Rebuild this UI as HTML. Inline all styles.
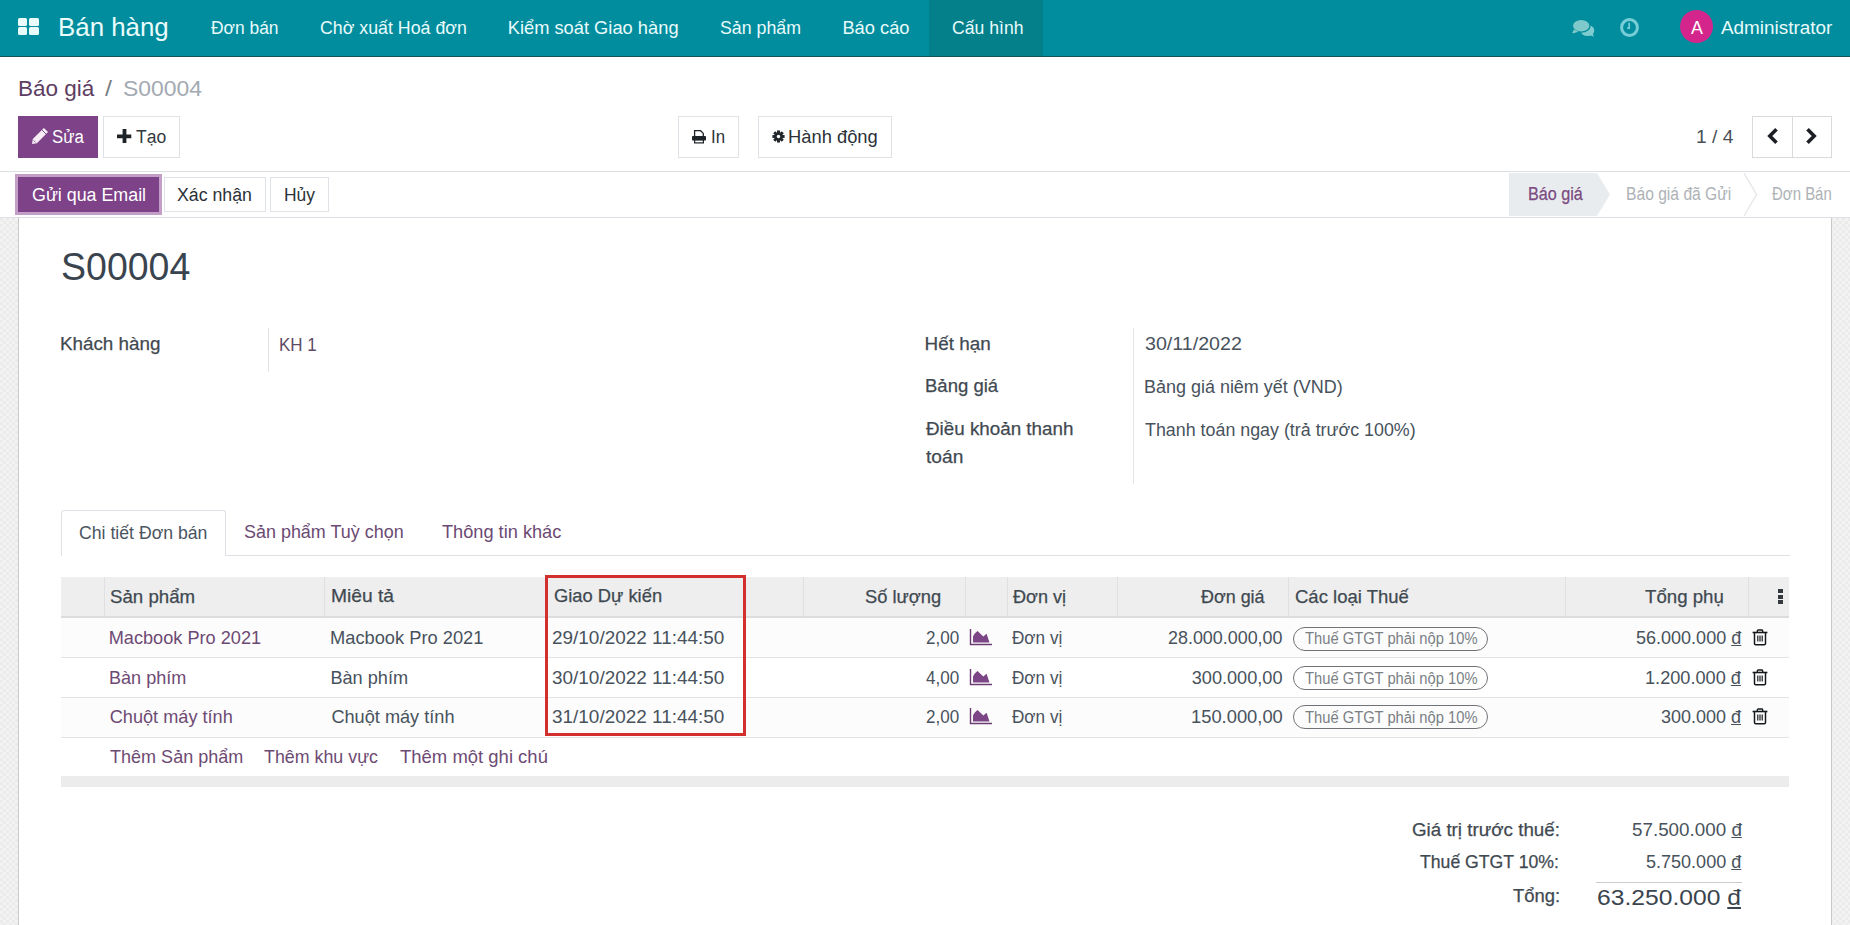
<!DOCTYPE html>
<html><head><meta charset="utf-8">
<style>
*{box-sizing:border-box;margin:0;padding:0}
html,body{width:1850px;height:925px;overflow:hidden;background:#fff;font-family:"Liberation Sans",sans-serif}
.t{position:absolute;white-space:pre;line-height:1;transform-origin:0 0}
.b{position:absolute}
</style></head><body>
<!-- background pattern -->
<div class="b" style="left:0;top:218px;width:1850px;height:707px;background-color:#ebebeb;background-image:linear-gradient(45deg,#f3f3f3 25%,transparent 25%,transparent 75%,#f3f3f3 75%),linear-gradient(45deg,#f3f3f3 25%,transparent 25%,transparent 75%,#f3f3f3 75%);background-size:6px 6px;background-position:0 0,3px 3px"></div>
<!-- sheet -->
<div class="b" style="left:18px;top:218px;width:1814px;height:707px;background:#fff;border-left:1px solid #c9c9c9;border-right:1px solid #c9c9c9"></div>
<!-- navbar -->
<div class="b" style="left:0;top:0;width:1850px;height:57px;background:#018d9d;border-bottom:1px solid #14525a"></div>
<div class="b" style="left:929px;top:0;width:114px;height:56px;background:#04808b"></div>
<!-- app icon -->
<div class="b" style="left:18px;top:18px;width:9px;height:8px;background:#eafbfc;border-radius:1.5px"></div>
<div class="b" style="left:29px;top:18px;width:9.5px;height:8px;background:#eafbfc;border-radius:1.5px"></div>
<div class="b" style="left:18px;top:27px;width:9px;height:8px;background:#eafbfc;border-radius:1.5px"></div>
<div class="b" style="left:29px;top:27px;width:9.5px;height:8px;background:#eafbfc;border-radius:1.5px"></div>
<!-- chat icon -->
<svg class="b" style="left:1566px;top:12px" width="36" height="30" viewBox="0 0 36 30">
<ellipse cx="21.5" cy="18.5" rx="6.8" ry="5.6" fill="#7fcbd0"/>
<path d="M22 22.5 L28 24.8 L25.5 19 Z" fill="#7fcbd0"/>
<path d="M7.5 18.5 L6 21.8 L13 19.8 Z" fill="#7fcbd0" stroke="#018d9d" stroke-width="0.6"/>
<ellipse cx="15.2" cy="13.8" rx="8.8" ry="6.4" fill="#80c9cb" stroke="#018d9d" stroke-width="1.3"/>
<path d="M7.8 17.5 L6.3 21.3 L12.5 19.4 Z" fill="#80c9cb"/>
</svg>
<!-- clock -->
<svg class="b" style="left:1619px;top:17px" width="21" height="21" viewBox="0 0 21 21">
<circle cx="10.5" cy="10.5" r="7.9" fill="none" stroke="#78ced6" stroke-width="3"/>
<path d="M10.2 5.8 V11.2 H8.2" fill="none" stroke="#78ced6" stroke-width="1.7"/>
</svg>
<!-- avatar -->
<div class="b" style="left:1680px;top:10px;width:33px;height:33px;border-radius:50%;background:#d3258b"></div>

<!-- control panel -->
<div class="b" style="left:0;top:171px;width:1850px;height:1px;background:#dcdfe3"></div>
<div class="b" style="left:0;top:217px;width:1850px;height:1px;background:#dcdfe3"></div>
<div class="b" style="left:18px;top:116px;width:80px;height:42px;background:#7d4288"></div>
<div class="b" style="left:103px;top:116px;width:77px;height:42px;border:1px solid #dfe2e6;background:#fff"></div>
<div class="b" style="left:678px;top:116px;width:61px;height:42px;border:1px solid #dfe2e6;background:#fff"></div>
<div class="b" style="left:758px;top:116px;width:134px;height:42px;border:1px solid #dfe2e6;background:#fff"></div>
<div class="b" style="left:1752px;top:116px;width:80px;height:42px;border:1px solid #d7dadd;background:#fff"></div>
<div class="b" style="left:1792px;top:116px;width:1px;height:42px;background:#d7dadd"></div>
<!-- pencil -->
<svg class="b" style="left:30px;top:128px" width="19" height="17" viewBox="0 0 19 17">
<path d="M2 16 L2.8 11.1 L13.9 0 L18 4.1 L6.9 15.2 Z" fill="#f6ecf6"/>
<path d="M12 2 L16 6" stroke="#7d4288" stroke-width="0.9"/>
<path d="M3.6 12.4 L5.6 14.4" stroke="#7d4288" stroke-width="0.8"/>
</svg>
<!-- plus -->
<svg class="b" style="left:117px;top:129px" width="15" height="15" viewBox="0 0 15 15">
<path d="M5.6 0 H9.4 V5.6 H14.3 V9.2 H9.4 V14 H5.6 V9.2 H0 V5.6 H5.6Z" fill="#1e2328"/>
</svg>
<!-- printer -->
<svg class="b" style="left:691px;top:129px" width="16" height="15" viewBox="0 0 16 15">
<path d="M3.6 7.5 V1.7 H9.6 L12.3 4.4 V7.5" fill="#fff" stroke="#1e2328" stroke-width="1.3"/>
<rect x="1" y="7" width="14" height="4.6" rx="0.8" fill="#1e2328"/>
<rect x="3.6" y="11" width="8.8" height="2.9" fill="#fff" stroke="#1e2328" stroke-width="1.2"/>
</svg>
<!-- gear -->
<svg class="b" style="left:772px;top:130px" width="13" height="13" viewBox="-7.5 -7.5 15 15">
<g fill="#22272c">
<circle r="5"/>
<rect x="-1.7" y="-7" width="3.4" height="14"/>
<rect x="-1.7" y="-7" width="3.4" height="14" transform="rotate(45)"/>
<rect x="-1.7" y="-7" width="3.4" height="14" transform="rotate(90)"/>
<rect x="-1.7" y="-7" width="3.4" height="14" transform="rotate(135)"/>
</g>
<circle r="2" fill="#fff"/>
</svg>
<!-- chevrons -->
<svg class="b" style="left:1766px;top:127px" width="13" height="18" viewBox="0 0 13 18">
<path d="M10.5 2.2 L3.8 9 L10.5 15.8" fill="none" stroke="#1c2025" stroke-width="3.6" stroke-linecap="butt" stroke-linejoin="miter"/>
</svg>
<svg class="b" style="left:1805px;top:127px" width="13" height="18" viewBox="0 0 13 18">
<path d="M2.5 2.2 L9.2 9 L2.5 15.8" fill="none" stroke="#1c2025" stroke-width="3.6" stroke-linecap="butt" stroke-linejoin="miter"/>
</svg>
<!-- status buttons -->
<div class="b" style="left:15px;top:174px;width:147px;height:41px;background:#c39fc7"></div>
<div class="b" style="left:18px;top:177px;width:141px;height:35px;background:#7d4288"></div>
<div class="b" style="left:164px;top:177px;width:102px;height:35px;border:1px solid #dfe2e6"></div>
<div class="b" style="left:270px;top:177px;width:59px;height:35px;border:1px solid #dfe2e6"></div>
<!-- statusbar -->
<svg class="b" style="left:1500px;top:172px" width="350" height="45" viewBox="0 0 350 45">
<path d="M9 1 H97 L110 22.5 L97 44 H9Z" fill="#e9ecef"/>
<path d="M244 1 L256.5 22.5 L244 44" fill="none" stroke="#e3e5e8" stroke-width="1.3"/>
</svg>

<!-- sheet contents -->
<div class="b" style="left:268px;top:328px;width:1px;height:44px;background:#e2e4e6"></div>
<div class="b" style="left:1133px;top:328px;width:1px;height:156px;background:#e2e4e6"></div>
<!-- tabs -->
<div class="b" style="left:61px;top:555px;width:1729px;height:1px;background:#dee2e6"></div>
<div class="b" style="left:61px;top:510px;width:165px;height:46px;background:#fff;border:1px solid #dee2e6;border-bottom:none;border-radius:3px 3px 0 0"></div>
<!-- table -->
<div class="b" style="left:61px;top:577px;width:1728px;height:41px;background:#eeeeee;border-bottom:2px solid #dddddf"></div>
<div class="b" style="left:61px;top:618px;width:1728px;height:40px;background:#fcfcfc;border-bottom:1px solid #e3e3e3"></div>
<div class="b" style="left:61px;top:658px;width:1728px;height:40px;background:#fff;border-bottom:1px solid #e3e3e3"></div>
<div class="b" style="left:61px;top:698px;width:1728px;height:40px;background:#fcfcfc;border-bottom:1px solid #e3e3e3"></div>
<div class="b" style="left:61px;top:776px;width:1728px;height:11px;background:#ececec"></div>
<!-- column dividers -->
<div class="b" style="left:104px;top:577px;width:1px;height:40px;background:#e0e0e0"></div>
<div class="b" style="left:324px;top:577px;width:1px;height:40px;background:#e0e0e0"></div>
<div class="b" style="left:803px;top:577px;width:1px;height:40px;background:#e0e0e0"></div>
<div class="b" style="left:965px;top:577px;width:1px;height:40px;background:#e0e0e0"></div>
<div class="b" style="left:1007px;top:577px;width:1px;height:40px;background:#e0e0e0"></div>
<div class="b" style="left:1117px;top:577px;width:1px;height:40px;background:#e0e0e0"></div>
<div class="b" style="left:1288px;top:577px;width:1px;height:40px;background:#e0e0e0"></div>
<div class="b" style="left:1565px;top:577px;width:1px;height:40px;background:#e0e0e0"></div>
<div class="b" style="left:1748px;top:577px;width:1px;height:40px;background:#e0e0e0"></div>
<!-- kebab -->
<div class="b" style="left:1778px;top:589px;width:5px;height:4px;background:#33393f"></div>
<div class="b" style="left:1778px;top:595px;width:5px;height:4px;background:#33393f"></div>
<div class="b" style="left:1778px;top:600px;width:5px;height:4px;background:#33393f"></div>
<svg class="b" style="left:969px;top:628.0px" width="24" height="18" viewBox="0 0 24 18"><path d="M1.5 1 V16.5 H23" fill="none" stroke="#6a3c72" stroke-width="1.4"/><path d="M4 14.5 V8.5 C5 6 7 4 8.6 3 L14.3 8.6 L17.6 5.8 L20.5 14.5 Z" fill="#7c4585"/></svg>
<div class="b" style="left:1293px;top:626.5px;width:195px;height:24px;border:1px solid #6f7378;border-radius:12px"></div>
<svg class="b" style="left:1752px;top:629.0px" width="16" height="17" viewBox="0 0 16 17"><path d="M5.3 3 V1.8 C5.3 1.3 5.7 1 6.2 1 H9.8 C10.3 1 10.7 1.3 10.7 1.8 V3" fill="none" stroke="#15191c" stroke-width="1.3"/><path d="M0.6 3.5 H15.4" stroke="#15191c" stroke-width="1.6"/><path d="M2.5 4 V14.5 C2.5 15.3 3 15.8 3.8 15.8 H12.2 C13 15.8 13.5 15.3 13.5 14.5 V4" fill="none" stroke="#15191c" stroke-width="1.5"/><path d="M5.8 6.5 V12.5 M8 6.5 V12.5 M10.2 6.5 V12.5" stroke="#15191c" stroke-width="1.2"/></svg>
<svg class="b" style="left:969px;top:667.7px" width="24" height="18" viewBox="0 0 24 18"><path d="M1.5 1 V16.5 H23" fill="none" stroke="#6a3c72" stroke-width="1.4"/><path d="M4 14.5 V8.5 C5 6 7 4 8.6 3 L14.3 8.6 L17.6 5.8 L20.5 14.5 Z" fill="#7c4585"/></svg>
<div class="b" style="left:1293px;top:666.2px;width:195px;height:24px;border:1px solid #6f7378;border-radius:12px"></div>
<svg class="b" style="left:1752px;top:668.7px" width="16" height="17" viewBox="0 0 16 17"><path d="M5.3 3 V1.8 C5.3 1.3 5.7 1 6.2 1 H9.8 C10.3 1 10.7 1.3 10.7 1.8 V3" fill="none" stroke="#15191c" stroke-width="1.3"/><path d="M0.6 3.5 H15.4" stroke="#15191c" stroke-width="1.6"/><path d="M2.5 4 V14.5 C2.5 15.3 3 15.8 3.8 15.8 H12.2 C13 15.8 13.5 15.3 13.5 14.5 V4" fill="none" stroke="#15191c" stroke-width="1.5"/><path d="M5.8 6.5 V12.5 M8 6.5 V12.5 M10.2 6.5 V12.5" stroke="#15191c" stroke-width="1.2"/></svg>
<svg class="b" style="left:969px;top:706.9px" width="24" height="18" viewBox="0 0 24 18"><path d="M1.5 1 V16.5 H23" fill="none" stroke="#6a3c72" stroke-width="1.4"/><path d="M4 14.5 V8.5 C5 6 7 4 8.6 3 L14.3 8.6 L17.6 5.8 L20.5 14.5 Z" fill="#7c4585"/></svg>
<div class="b" style="left:1293px;top:705.4px;width:195px;height:24px;border:1px solid #6f7378;border-radius:12px"></div>
<svg class="b" style="left:1752px;top:707.9px" width="16" height="17" viewBox="0 0 16 17"><path d="M5.3 3 V1.8 C5.3 1.3 5.7 1 6.2 1 H9.8 C10.3 1 10.7 1.3 10.7 1.8 V3" fill="none" stroke="#15191c" stroke-width="1.3"/><path d="M0.6 3.5 H15.4" stroke="#15191c" stroke-width="1.6"/><path d="M2.5 4 V14.5 C2.5 15.3 3 15.8 3.8 15.8 H12.2 C13 15.8 13.5 15.3 13.5 14.5 V4" fill="none" stroke="#15191c" stroke-width="1.5"/><path d="M5.8 6.5 V12.5 M8 6.5 V12.5 M10.2 6.5 V12.5" stroke="#15191c" stroke-width="1.2"/></svg>
<!-- red box -->
<div class="b" style="left:545px;top:575px;width:201px;height:161px;border:3px solid #d22f2f"></div>
<!-- totals line -->
<div class="b" style="left:1596px;top:882px;width:146px;height:1px;background:#c8ccd0"></div>
<div class="t" style="left:58.24px;top:14.00px;font-size:26.45px;color:#e9fbfc;transform:scaleX(0.9781);">Bán hàng</div>
<div class="t" style="left:210.80px;top:19.00px;font-size:18.31px;color:#e9fbfc;transform:scaleX(0.9510);">Đơn bán</div>
<div class="t" style="left:320.10px;top:19.00px;font-size:18.31px;color:#e9fbfc;transform:scaleX(0.9716);">Chờ xuất Hoá đơn</div>
<div class="t" style="left:507.70px;top:19.00px;font-size:18.31px;color:#e9fbfc;">Kiểm soát Giao hàng</div>
<div class="t" style="left:719.80px;top:19.00px;font-size:18.31px;color:#e9fbfc;transform:scaleX(0.9715);">Sản phẩm</div>
<div class="t" style="left:842.40px;top:19.00px;font-size:18.31px;color:#e9fbfc;">Báo cáo</div>
<div class="t" style="left:952.00px;top:19.00px;font-size:18.31px;color:#e9fbfc;transform:scaleX(0.9633);">Cấu hình</div>
<div class="t" style="left:1721.00px;top:19.00px;font-size:18.9px;color:#e9fbfc;">Administrator</div>
<div class="t" style="left:1690.90px;top:20.00px;font-size:17.73px;color:#ffffff;transform:scaleX(1.0083);">A</div>
<div class="t" style="left:18.21px;top:77.00px;font-size:22.82px;color:#5e3d62;transform:scaleX(0.9872);">Báo giá</div>
<div class="t" style="left:105.00px;top:77.00px;font-size:22.82px;color:#7a7f85;transform:scaleX(1.1000);">/</div>
<div class="t" style="left:122.99px;top:77.00px;font-size:22.82px;color:#a3aab2;transform:scaleX(1.0056);">S00004</div>
<div class="t" style="left:52.00px;top:128.00px;font-size:18.46px;color:#ffffff;transform:scaleX(0.9119);">Sửa</div>
<div class="t" style="left:136.00px;top:128.00px;font-size:18.46px;color:#333a40;transform:scaleX(0.9519);">Tạo</div>
<div class="t" style="left:710.69px;top:128.00px;font-size:18.46px;color:#2b3238;transform:scaleX(0.9134);">In</div>
<div class="t" style="left:788.41px;top:128.00px;font-size:18.46px;color:#2b3238;transform:scaleX(0.9948);">Hành động</div>
<div class="t" style="left:1696.48px;top:128.00px;font-size:18.9px;color:#4a4f55;transform:scaleX(1.0156);">1 / 4</div>
<div class="t" style="left:32.00px;top:186.00px;font-size:18.46px;color:#ffffff;transform:scaleX(0.9675);">Gửi qua Email</div>
<div class="t" style="left:177.00px;top:186.00px;font-size:18.46px;color:#2b3238;transform:scaleX(0.9607);">Xác nhận</div>
<div class="t" style="left:283.65px;top:186.00px;font-size:18.46px;color:#2b3238;transform:scaleX(0.9457);">Hủy</div>
<div class="t" style="left:1528.40px;top:186.00px;font-size:17.88px;color:#7a4a80;-webkit-text-stroke:0.25px #7a4a80;transform:scaleX(0.9038);">Báo giá</div>
<div class="t" style="left:1625.52px;top:186.00px;font-size:17.88px;color:#aeb2b6;transform:scaleX(0.8756);">Báo giá đã Gửi</div>
<div class="t" style="left:1772.40px;top:186.00px;font-size:17.88px;color:#aeb2b6;transform:scaleX(0.8387);">Đơn Bán</div>
<div class="t" style="left:60.64px;top:247.00px;font-size:39.24px;color:#3a444e;transform:scaleX(0.9562);">S00004</div>
<div class="t" style="left:60.40px;top:335.00px;font-size:18.9px;color:#3f4951;-webkit-text-stroke:0.25px #3f4951;transform:scaleX(0.9957);">Khách hàng</div>
<div class="t" style="left:279.40px;top:336.00px;font-size:18.9px;color:#5e4a66;transform:scaleX(0.8990);">KH 1</div>
<div class="t" style="left:924.60px;top:335.00px;font-size:18.9px;color:#3f4951;-webkit-text-stroke:0.25px #3f4951;">Hết hạn</div>
<div class="t" style="left:924.62px;top:377.00px;font-size:18.9px;color:#3f4951;-webkit-text-stroke:0.25px #3f4951;transform:scaleX(0.9802);">Bảng giá</div>
<div class="t" style="left:925.60px;top:420.00px;font-size:18.9px;color:#3f4951;-webkit-text-stroke:0.25px #3f4951;transform:scaleX(0.9954);">Điều khoản thanh</div>
<div class="t" style="left:925.60px;top:448.00px;font-size:18.9px;color:#3f4951;-webkit-text-stroke:0.25px #3f4951;transform:scaleX(1.0149);">toán</div>
<div class="t" style="left:1144.60px;top:335.00px;font-size:18.9px;color:#48525c;transform:scaleX(1.0395);">30/11/2022</div>
<div class="t" style="left:1143.65px;top:378.00px;font-size:18.9px;color:#48525c;transform:scaleX(0.9507);">Bảng giá niêm yết (VND)</div>
<div class="t" style="left:1144.60px;top:421.00px;font-size:18.9px;color:#48525c;transform:scaleX(0.9448);">Thanh toán ngay (trả trước 100%)</div>
<div class="t" style="left:79.20px;top:524.00px;font-size:18.6px;color:#4a5560;transform:scaleX(0.9500);">Chi tiết Đơn bán</div>
<div class="t" style="left:244.40px;top:523.00px;font-size:18.6px;color:#6b4a73;transform:scaleX(0.9651);">Sản phẩm Tuỳ chọn</div>
<div class="t" style="left:442.00px;top:523.00px;font-size:18.6px;color:#6b4a73;transform:scaleX(0.9781);">Thông tin khác</div>
<div class="t" style="left:110.00px;top:589.00px;font-size:17.73px;color:#3f4951;-webkit-text-stroke:0.25px #3f4951;transform:scaleX(1.0536);">Sản phẩm</div>
<div class="t" style="left:331.12px;top:588.00px;font-size:17.73px;color:#3f4951;-webkit-text-stroke:0.25px #3f4951;transform:scaleX(1.0847);">Miêu tả</div>
<div class="t" style="left:553.80px;top:588.00px;font-size:17.73px;color:#3f4951;-webkit-text-stroke:0.25px #3f4951;transform:scaleX(1.0349);">Giao Dự kiến</div>
<div class="t" style="left:865.40px;top:589.00px;font-size:17.73px;color:#3f4951;-webkit-text-stroke:0.25px #3f4951;transform:scaleX(1.0334);">Số lượng</div>
<div class="t" style="left:1013.30px;top:589.00px;font-size:17.73px;color:#3f4951;-webkit-text-stroke:0.25px #3f4951;transform:scaleX(1.0205);">Đơn vị</div>
<div class="t" style="left:1200.60px;top:589.00px;font-size:17.73px;color:#3f4951;-webkit-text-stroke:0.25px #3f4951;transform:scaleX(1.0114);">Đơn giá</div>
<div class="t" style="left:1295.00px;top:589.00px;font-size:17.73px;color:#3f4951;-webkit-text-stroke:0.25px #3f4951;transform:scaleX(1.0441);">Các loại Thuế</div>
<div class="t" style="left:1645.30px;top:589.00px;font-size:17.73px;color:#3f4951;-webkit-text-stroke:0.25px #3f4951;transform:scaleX(1.0524);">Tổng phụ</div>
<div class="t" style="left:108.70px;top:629.00px;font-size:18.17px;color:#6d4a74;">Macbook Pro 2021</div>
<div class="t" style="left:330.39px;top:629.00px;font-size:18.17px;color:#48525c;transform:scaleX(1.0066);">Macbook Pro 2021</div>
<div class="t" style="left:552.40px;top:629.00px;font-size:18.17px;color:#48525c;transform:scaleX(1.0427);">29/10/2022 11:44:50</div>
<div class="t" style="left:925.70px;top:629.00px;font-size:18.17px;color:#48525c;transform:scaleX(0.9393);">2,00</div>
<div class="t" style="left:1012.40px;top:629.00px;font-size:18.17px;color:#48525c;transform:scaleX(0.9438);">Đơn vị</div>
<div class="t" style="left:1635.80px;top:629.00px;font-size:18.17px;color:#48525c;transform:scaleX(0.9924);">56.000.000 <u>đ</u></div>
<div class="t" style="left:1168.00px;top:629.00px;font-size:18.17px;color:#48525c;transform:scaleX(0.9861);">28.000.000,00</div>
<div class="t" style="left:1305.00px;top:631.00px;font-size:16.86px;color:#7a7f84;transform:scaleX(0.8739);">Thuế GTGT phải nộp 10%</div>
<div class="t" style="left:108.71px;top:669.00px;font-size:18.17px;color:#6d4a74;transform:scaleX(0.9948);">Bàn phím</div>
<div class="t" style="left:330.40px;top:669.00px;font-size:18.17px;color:#48525c;">Bàn phím</div>
<div class="t" style="left:552.40px;top:669.00px;font-size:18.17px;color:#48525c;transform:scaleX(1.0427);">30/10/2022 11:44:50</div>
<div class="t" style="left:925.70px;top:669.00px;font-size:18.17px;color:#48525c;transform:scaleX(0.9393);">4,00</div>
<div class="t" style="left:1012.40px;top:669.00px;font-size:18.17px;color:#48525c;transform:scaleX(0.9438);">Đơn vị</div>
<div class="t" style="left:1645.00px;top:669.00px;font-size:18.17px;color:#48525c;">1.200.000 <u>đ</u></div>
<div class="t" style="left:1191.70px;top:669.00px;font-size:18.17px;color:#48525c;">300.000,00</div>
<div class="t" style="left:1305.00px;top:671.00px;font-size:16.86px;color:#7a7f84;transform:scaleX(0.8739);">Thuế GTGT phải nộp 10%</div>
<div class="t" style="left:109.70px;top:708.00px;font-size:18.17px;color:#6d4a74;">Chuột máy tính</div>
<div class="t" style="left:331.40px;top:708.00px;font-size:18.17px;color:#48525c;">Chuột máy tính</div>
<div class="t" style="left:552.40px;top:708.00px;font-size:18.17px;color:#48525c;transform:scaleX(1.0427);">31/10/2022 11:44:50</div>
<div class="t" style="left:925.70px;top:708.00px;font-size:18.17px;color:#48525c;transform:scaleX(0.9393);">2,00</div>
<div class="t" style="left:1012.40px;top:708.00px;font-size:18.17px;color:#48525c;transform:scaleX(0.9438);">Đơn vị</div>
<div class="t" style="left:1661.00px;top:708.00px;font-size:18.17px;color:#48525c;transform:scaleX(0.9905);">300.000 <u>đ</u></div>
<div class="t" style="left:1190.69px;top:708.00px;font-size:18.17px;color:#48525c;transform:scaleX(1.0103);">150.000,00</div>
<div class="t" style="left:1305.00px;top:710.00px;font-size:16.86px;color:#7a7f84;transform:scaleX(0.8739);">Thuế GTGT phải nộp 10%</div>
<div class="t" style="left:109.50px;top:748.00px;font-size:18.17px;color:#6d4a74;transform:scaleX(0.9933);">Thêm Sản phẩm</div>
<div class="t" style="left:264.00px;top:748.00px;font-size:18.17px;color:#6d4a74;transform:scaleX(0.9819);">Thêm khu vực</div>
<div class="t" style="left:400.20px;top:748.00px;font-size:18.17px;color:#6d4a74;transform:scaleX(1.0179);">Thêm một ghi chú</div>
<div class="t" style="left:1411.70px;top:822.00px;font-size:17.88px;color:#3f4951;-webkit-text-stroke:0.25px #3f4951;transform:scaleX(1.0506);">Giá trị trước thuế:</div>
<div class="t" style="left:1420.40px;top:854.00px;font-size:17.88px;color:#3f4951;-webkit-text-stroke:0.25px #3f4951;transform:scaleX(0.9873);">Thuế GTGT 10%:</div>
<div class="t" style="left:1512.50px;top:888.00px;font-size:17.88px;color:#3f4951;-webkit-text-stroke:0.25px #3f4951;transform:scaleX(1.0312);">Tổng:</div>
<div class="t" style="left:1631.60px;top:822.00px;font-size:17.88px;color:#48525c;transform:scaleX(1.0532);">57.500.000 <u>đ</u></div>
<div class="t" style="left:1646.20px;top:854.00px;font-size:17.88px;color:#48525c;transform:scaleX(1.0094);">5.750.000 <u>đ</u></div>
<div class="t" style="left:1597.00px;top:887.00px;font-size:22.53px;color:#3a444e;transform:scaleX(1.0951);">63.250.000 <u>đ</u></div>
</body></html>
